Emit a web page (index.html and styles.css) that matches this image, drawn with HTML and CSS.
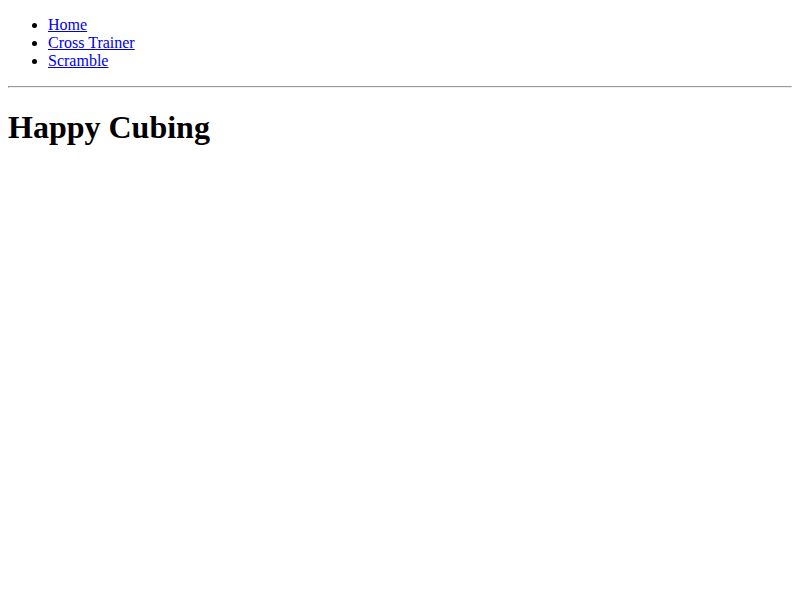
FILE: index.html
```html
<!DOCTYPE html>
<html>
<head>
<meta charset="utf-8">
<title>Happy Cubing</title>
<link rel="stylesheet" href="styles.css">
</head>
<body class="page">
<ul class="nav">
<li class="nav-item"><a class="nav-link" href="#">Home</a></li>
<li class="nav-item"><a class="nav-link" href="#">Cross Trainer</a></li>
<li class="nav-item"><a class="nav-link" href="#">Scramble</a></li>
</ul>
<hr class="divider">
<h1 class="title">Happy Cubing</h1>
</body>
</html>
```

FILE: styles.css
```css
.page {
  margin: 8px;
  font-family: "Liberation Serif", "Times New Roman", serif;
  font-size: 16px;
  background: #fff;
  color: #000;
}
.nav {
  margin: 8px 0 16px;
  padding-left: 40px;
  list-style: disc;
}
.nav-link {
  color: #0000ee;
  text-decoration: underline;
}
.divider {
  margin: 8px 0;
  border-width: 1px;
  border-style: solid;
  border-color: #9a9a9a #eee #eee #9a9a9a;
}
.title {
  font-size: 2em;
  font-weight: bold;
  margin: 0.67em 0;
}
```
